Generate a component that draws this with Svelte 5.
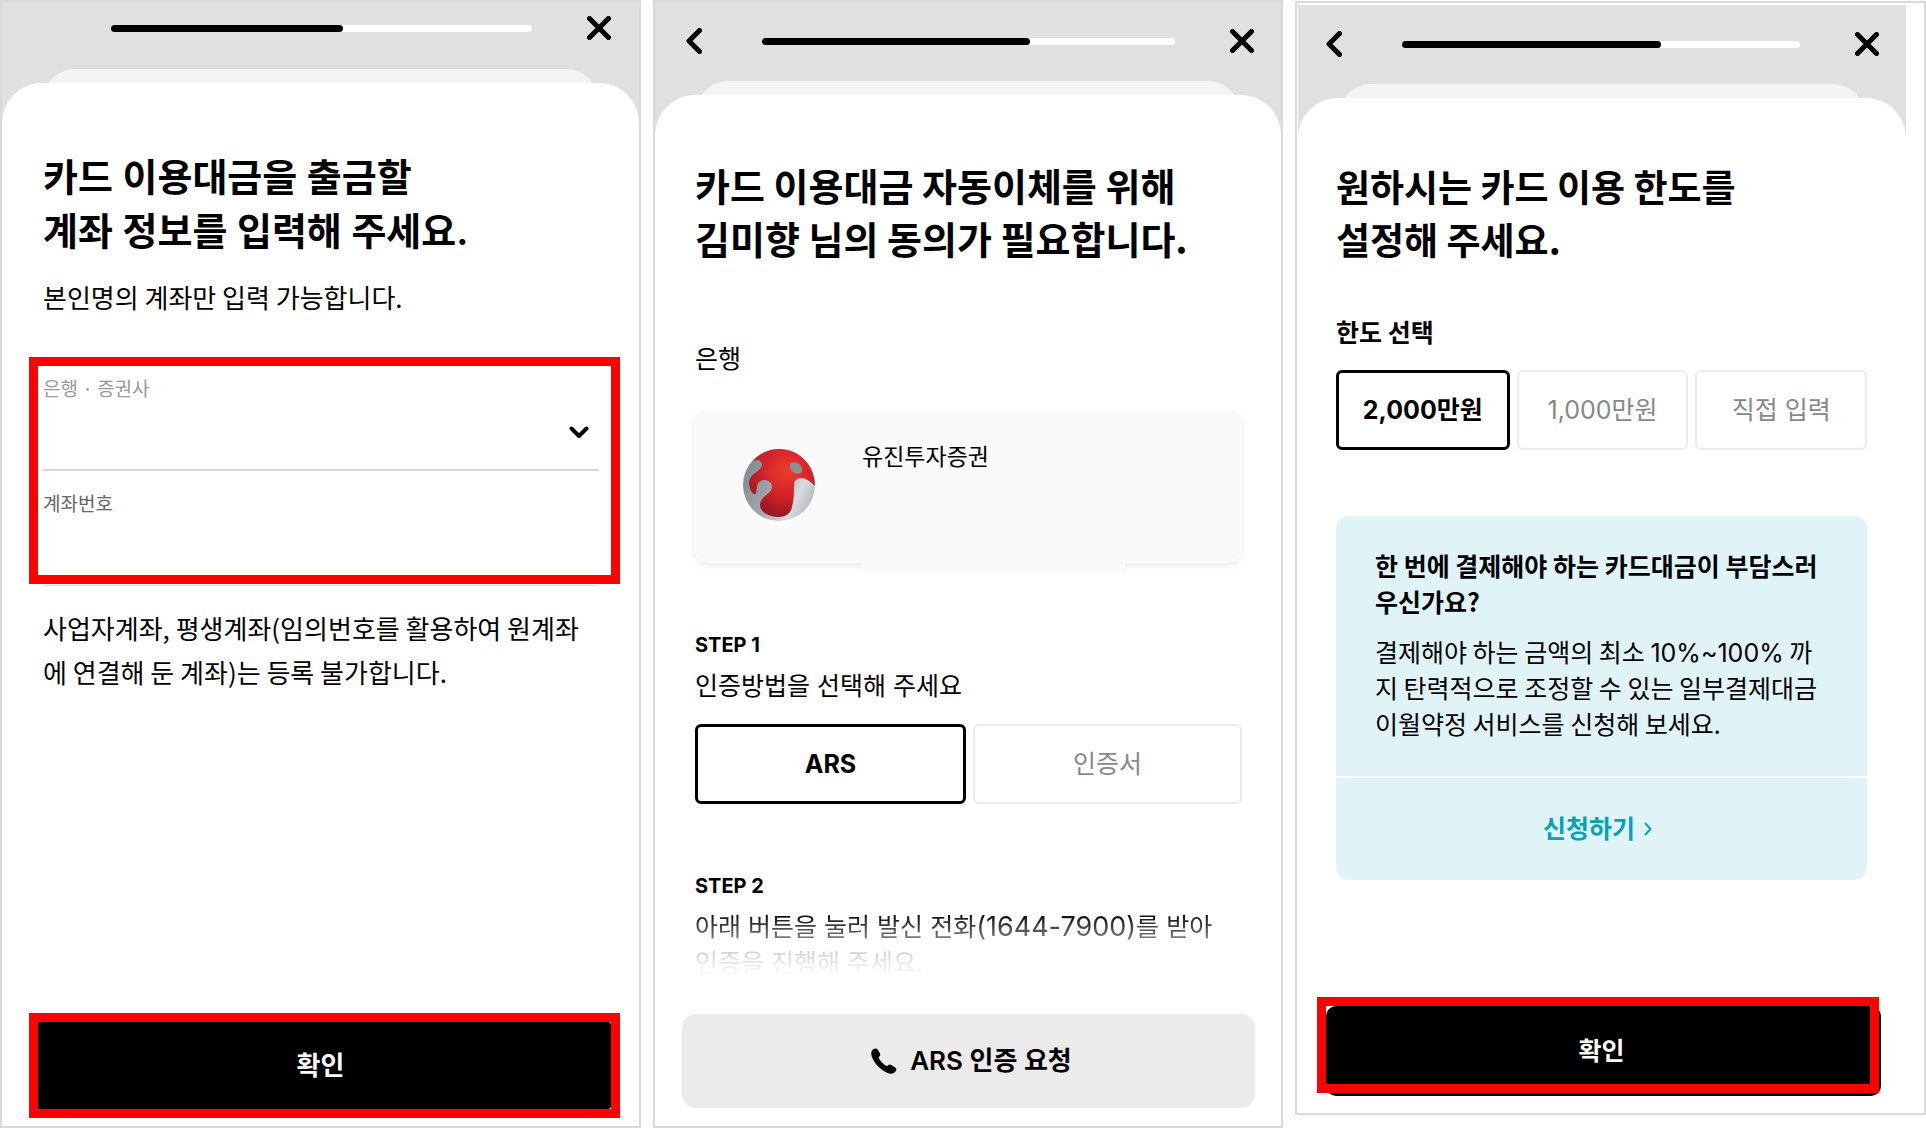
<script>
    let bank = '';
    let account = '';
    let method = 'ARS';
    let limit = '2,000만원';

    const methods = ['ARS', '인증서'];
    const limits = ['2,000만원', '1,000만원', '직접 입력'];
</script>

{#snippet topbar(progress, back)}
    <header class="topbar">
        {#if back}
            <button class="icon-btn back" aria-label="이전">
                <svg width="16" height="26" viewBox="0 0 16 26"><path d="M13.500 2.500 3 13l10.500 10.500" /></svg>
            </button>
        {:else}
            <span class="back"></span>
        {/if}
        <div class="progress" role="progressbar" aria-label="진행률" aria-valuenow={progress}>
            <div class="progress-fill" style="width: {progress}%"></div>
        </div>
        <button class="icon-btn" aria-label="닫기">
            <svg width="24" height="24" viewBox="0 0 24 24"><path d="M2.500 2.500l19 19M21.500 2.500l-19 19" /></svg>
        </button>
    </header>
    <div class="sheet-behind"></div>
{/snippet}

<main>
    <!-- 출금 계좌 입력 -->
    <section class="panel account">
        <div class="phone">
            {@render topbar(55, false)}
            <div class="sheet">
                <h1>카드 이용대금을 출금할<br />계좌 정보를 입력해 주세요.</h1>
                <p class="sub">본인명의 계좌만 입력 가능합니다.</p>

                <div class="marked fields">
                    <label class="muted" for="bank">은행 · 증권사</label>
                    <div class="select-wrap">
                        <select id="bank" bind:value={bank}>
                            <option value=""></option>
                            <option value="eugene">유진투자증권</option>
                        </select>
                        <svg class="caret" width="20" height="13" viewBox="0 0 20 13"><path d="M2.500 2.500 10 10l7.500-7.500" /></svg>
                    </div>
                    <label for="account">계좌번호</label>
                    <input id="account" type="text" inputmode="numeric" bind:value={account} />
                </div>
                <hr />
                <p class="notice">사업자계좌, 평생계좌(임의번호를 활용하여 원계좌<br />에 연결해 둔 계좌)는 등록 불가합니다.</p>

                <div class="marked bottom">
                    <button class="confirm">확인</button>
                </div>
            </div>
        </div>
    </section>

    <!-- 자동이체 동의 -->
    <section class="panel consent">
        <div class="phone">
            {@render topbar(65, true)}
            <div class="sheet">
                <h1>카드 이용대금 자동이체를 위해<br />김미향 님의 동의가 필요합니다.</h1>
                <p class="bank-label">은행</p>
                <div class="bank-card">
                    <svg class="bank-logo" width="72" height="72" viewBox="0 0 72 72">
                        <defs>
                            <radialGradient id="red" cx="58%" cy="32%" r="65%">
                                <stop offset="0" stop-color="#f03c2e" />
                                <stop offset="0.6" stop-color="#d0222a" />
                                <stop offset="1" stop-color="#9c1a20" />
                            </radialGradient>
                            <linearGradient id="silver" x1="0" y1="0.3" x2="1" y2="0.8">
                                <stop offset="0" stop-color="#7f8a91" />
                                <stop offset="0.45" stop-color="#a3aaae" />
                                <stop offset="0.75" stop-color="#dadcdf" />
                                <stop offset="1" stop-color="#a8b0b5" />
                            </linearGradient>
                        </defs>
                        <circle cx="36" cy="36" r="36" fill="url(#silver)" />
                        <path
                            fill="url(#red)"
                            d="M9 13C16 5 25 0 36 0c20 0 36 16 36 37-4-4-9-8-14-8-5 0-7 3-7 8 0 6 0 14-2 21-1 6-6 10-13 10-10 0-19-5-19-12 0-9 12-11 12-18 0-5-4-7-8-7-5 0-7 4-7 8-1 3 0 6-2 6-4 0-6-7-6-12 1-6 6-9 10-12 3-3 4-6 2-8-2-3-6-2-9 0z"
                        />
                        <ellipse cx="53" cy="19" rx="7" ry="5" fill="#8b9093" transform="rotate(38 53 19)" />
                    </svg>
                    <div class="bank-info">유진투자증권</div>
                </div>

                <h2 class="step">STEP 1</h2>
                <p class="step-text">인증방법을 선택해 주세요</p>
                <div class="options">
                    {#each methods as item}
                        <button class="option" class:selected={method === item} aria-pressed={method === item} on:click={() => (method = item)}>{item}</button>
                    {/each}
                </div>

                <h2 class="step">STEP 2</h2>
                <p class="step-text faded">아래 버튼을 눌러 발신 전화<span class="tel">(1644-7900)</span>를 받아<br />인증을 진행해 주세요.</p>

                <button class="ars bottom">
                    <svg width="26" height="26" viewBox="0 0 26 26">
                        <path
                            d="M2 1.500C4 0 5.500 0 7 2l2 3.500c.6 1.300.3 2.200-.6 3L7.500 9.500c1.500 3.500 5 7 8.500 8.800l1.500-1.200c1-.8 1.900-.8 3-.1l3.700 2.500c1.500 1.200 1.500 2.500.3 4-2.500 3-6 2.500-9.500.8C8 20.500 3 14.500.8 8.500-.3 5.500.2 3 2 1.500z"
                        />
                    </svg>
                    ARS 인증 요청
                </button>
            </div>
        </div>
    </section>

    <!-- 이용 한도 설정 -->
    <section class="panel limit">
        <div class="phone">
            {@render topbar(65, true)}
            <div class="sheet">
                <h1>원하시는 카드 이용 한도를<br />설정해 주세요.</h1>
                <h2 class="limit-label">한도 선택</h2>
                <div class="options">
                    {#each limits as item}
                        <button class="option" class:selected={limit === item} aria-pressed={limit === item} on:click={() => (limit = item)}>{item}</button>
                    {/each}
                </div>

                <div class="promo">
                    <div class="promo-body">
                        <h3>한 번에 결제해야 하는 카드대금이 부담스러<br />우신가요?</h3>
                        <p>결제해야 하는 금액의 최소 <span class="num">10%~100%</span> 까<br />지 탄력적으로 조정할 수 있는 일부결제대금<br />이월약정 서비스를 신청해 보세요.</p>
                    </div>
                    <a href="#apply">
                        신청하기
                        <svg width="8" height="14" viewBox="0 0 8 14"><path d="M1.500 1.500 6.500 7l-5 5.500" /></svg>
                    </a>
                </div>

                <div class="confirm-wrap bottom">
                    <button class="confirm">확인</button>
                    <span class="frame"></span>
                </div>
            </div>
        </div>
    </section>
</main>

<style>
    :global(body) {
        background: #fff;
    }

    main {
        --latin: Inter, 'Noto Sans CJK KR', sans-serif;
        --korean: 'Noto Sans CJK KR', Inter, sans-serif;
        display: grid;
        grid-template-columns: 641fr 630fr 631fr;
        gap: 12px;
        min-height: 100vh;
        padding-bottom: 1px;
        box-sizing: border-box;
        color: #000;
        font-family: var(--latin);
        font-size: 25px;
        line-height: 36px;
        white-space: nowrap;
    }

    h1,
    h2,
    h3,
    p {
        margin: 0;
    }

    button,
    input,
    select {
        font: inherit;
        color: inherit;
        border: 0;
        padding: 0;
        background: none;
        box-sizing: border-box;
    }

    button {
        cursor: pointer;
    }

    path {
        stroke-linecap: round;
        stroke-linejoin: round;
    }

    .panel {
        display: flex;
        border: 2px solid #dadada;
        min-width: 0;
    }

    .phone {
        flex: 1;
        display: flex;
        flex-direction: column;
        background: #e0e0e0;
        min-width: 0;
    }

    /* 상단 진행 바 */
    .topbar {
        display: flex;
        align-items: center;
        height: 24px;
        padding: 27px 27px 28px 31px;
    }

    .icon-btn {
        display: flex;
    }

    .icon-btn path,
    .caret path {
        fill: none;
        stroke: #000;
        stroke-width: 5;
    }

    .caret path {
        stroke-width: 4;
    }

    .back {
        width: 16px;
        margin-right: 60px;
    }

    .progress {
        flex: 1;
        height: 7px;
        margin-right: 55px;
        border-radius: 4px;
        background: #fff;
    }

    .progress-fill {
        height: 100%;
        border-radius: 4px;
        background: #000;
    }

    .sheet-behind {
        height: 40px;
        margin: 0 41px -26px;
        border-radius: 32px 32px 0 0;
        background: #f4f4f2;
    }

    .sheet {
        position: relative;
        flex: 1;
        display: flex;
        flex-direction: column;
        padding: 63px 39px 18px 40px;
        border-radius: 40px 40px 0 0;
        background: #fff;
    }

    h1 {
        font-family: var(--korean);
        font-size: 38px;
        line-height: 53px;
        font-weight: 600;
    }

    .bottom {
        margin-top: auto;
    }

    .confirm {
        width: 100%;
        background: #000;
        color: #fff;
        font-family: var(--latin);
        font-weight: 600;
    }

    .options {
        display: flex;
        gap: 7px;
    }

    .option {
        flex: 1;
        height: 80px;
        border: 2px solid #ececec;
        border-radius: 6px;
        color: #888;
    }

    .option.selected {
        border: 3px solid #000;
        color: #000;
        font-weight: 700;
    }

    /* 계좌 입력 */
    .account {
        font-family: var(--korean);
        font-size: 26px;
        line-height: 44px;
    }

    .account .topbar {
        padding: 14px 28px 29px 33px;
    }

    .account .sheet {
        padding: 67px 40px 8px 41px;
    }

    .account h1 {
        font-family: var(--latin);
        line-height: 54px;
    }

    .sub {
        margin-top: 17px;
    }

    .marked {
        margin-left: -14px;
        margin-right: -21px;
        border: 9px solid #f00;
    }

    .fields {
        display: flex;
        flex-direction: column;
        margin-top: 38px;
        padding: 10px 12px 0 5px;
    }

    .fields label {
        font-size: 19px;
        line-height: 24px;
        color: #666;
    }

    .fields label.muted {
        color: #999;
    }

    .select-wrap {
        display: grid;
        align-items: center;
        margin-bottom: 20px;
        border-bottom: 2px solid #d6d6d6;
    }

    .select-wrap > * {
        grid-area: 1 / 1;
    }

    select {
        width: 100%;
        height: 69px;
        appearance: none;
    }

    .caret {
        justify-self: end;
        margin-right: 10px;
        margin-bottom: 4px;
        pointer-events: none;
    }

    .fields input {
        width: 100%;
        height: 60px;
    }

    hr {
        width: 100%;
        height: 1px;
        margin: 1px 0 20px;
        border: 0;
        background: #e0e0e0;
    }

    .account .confirm {
        display: block;
        height: 87px;
        padding-right: 8px;
        border-radius: 0 3px 3px 0;
    }

    /* 자동이체 동의 */
    .bank-label {
        margin-top: 77px;
    }

    .bank-card {
        display: flex;
        height: 154px;
        margin: 32px 0 0 -1px;
        border-radius: 14px;
        background: #fafafa;
        box-shadow: 0 3px 6px rgba(0, 0, 0, 0.08);
    }

    .bank-logo {
        margin: 40px 47px 0 49px;
    }

    .bank-info {
        width: 263px;
        height: 135px;
        padding-top: 30px;
        background: #fafafa;
        font-size: 23px;
    }

    .step {
        margin-top: 70px;
        font-size: 20px;
        line-height: 24px;
        font-weight: 700;
    }

    .step-text {
        margin-top: 11px;
    }

    .consent .options {
        margin-top: 20px;
    }

    .faded {
        color: transparent;
        background: linear-gradient(#111 10%, #888 45%, #d0d0d0 58%, #fff 94%);
        background-clip: text;
    }

    .tel {
        font-size: 27px;
    }

    .ars {
        display: flex;
        align-items: center;
        justify-content: center;
        gap: 13px;
        height: 94px;
        margin-left: -13px;
        margin-right: -13px;
        padding-left: 6px;
        border-radius: 14px;
        background: #ebebeb;
        font-size: 26px;
        font-weight: 600;
    }

    /* 한도 설정 */
    .limit {
        margin: 1px 0 13px;
        padding: 2px 18px 0 1px;
    }

    .limit .topbar {
        padding: 27px 27px 28px 28px;
    }

    .limit .sheet {
        padding: 62px 39px 17px 38px;
    }

    .limit h1 {
        font-size: 37px;
    }

    .limit-label {
        margin: 47px 0 21px;
        font-family: var(--korean);
        font-size: 25px;
        line-height: 36px;
        font-weight: 600;
    }

    .promo {
        margin-top: 66px;
        border-radius: 13px;
        background: #e0f4f8;
    }

    .promo-body {
        padding: 31px 39px 35px;
        border-bottom: 2px solid #fff;
        font-family: var(--korean);
    }

    .promo h3 {
        margin-bottom: 14px;
        font-size: 25px;
        font-weight: 600;
    }

    .num {
        font-family: var(--latin);
        line-height: 1;
    }

    .promo a {
        display: flex;
        align-items: center;
        justify-content: center;
        gap: 9px;
        height: 102px;
        padding-right: 8px;
        color: #00a3b8;
        font-weight: 600;
        text-decoration: none;
    }

    .promo a path {
        fill: none;
        stroke: currentColor;
        stroke-width: 2;
    }

    .confirm-wrap {
        position: relative;
        margin-left: -10px;
        margin-right: -14px;
    }

    .limit .confirm {
        display: block;
        height: 90px;
        padding-right: 4px;
        border-radius: 10px;
    }

    .frame {
        position: absolute;
        inset: -9px 2px 3px -9px;
        border: 9px solid #f00;
        pointer-events: none;
    }
</style>
